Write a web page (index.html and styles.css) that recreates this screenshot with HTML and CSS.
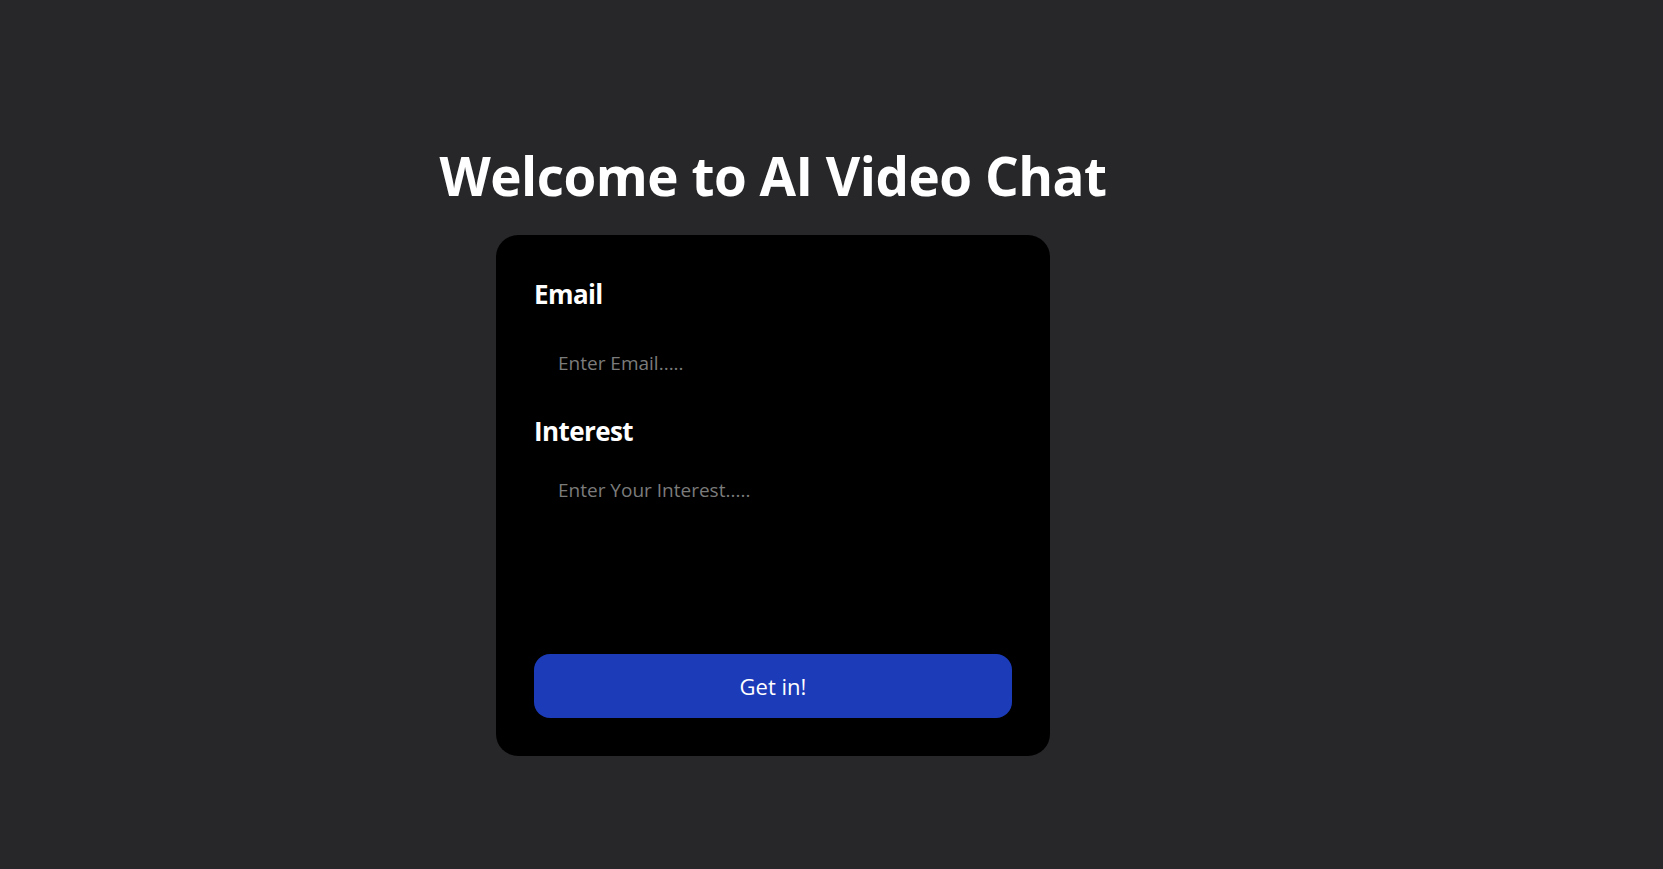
FILE: index.html
```html
<!DOCTYPE html>
<html lang="en">
<head>
<meta charset="UTF-8">
<title>AI Video Chat</title>
<link rel="stylesheet" href="styles.css">
</head>
<body>
<main class="page">
  <h1 class="title">Welcome to AI Video Chat</h1>
  <form class="card">
    <label class="label label-email" for="email">Email</label>
    <input class="field" id="email" type="email" placeholder="Enter Email.....">
    <label class="label label-interest" for="interest">Interest</label>
    <textarea class="area" id="interest" placeholder="Enter Your Interest....."></textarea>
    <button class="submit" type="button">Get in!</button>
  </form>
</main>
</body>
</html>
```

FILE: styles.css
```css
* { box-sizing: border-box; }

html, body {
  margin: 0;
  padding: 0;
  background: #27272a;
  height: 100%;
}

body {
  font-family: "Open Sans", "Noto Sans", sans-serif;
  color: #fff;
}

.page {
  display: flex;
  flex-direction: column;
  align-items: center;
  padding-top: 148px;
  padding-right: 117px;
  min-height: 100%;
}

.title {
  margin: 0;
  font-size: 53px;
  line-height: 56px;
  font-weight: 700;
  color: #fff;
  letter-spacing: -0.5px;
}

.card {
  margin-top: 31px;
  width: 554px;
  padding: 38px;
  background: #000;
  border-radius: 22px;
  display: flex;
  flex-direction: column;
}

.label {
  font-size: 26px;
  line-height: 40px;
  font-weight: 700;
  color: #fff;
  letter-spacing: -0.6px;
}

.label-email {
  padding-top: 1px;
}

.label-interest {
  margin-top: 15px;
}

.field {
  margin-top: 16px;
  height: 66px;
  padding: 0 24px;
  background: transparent;
  border: none;
  outline: none;
  font-family: inherit;
  font-size: 19px;
  color: #fff;
}

.area {
  margin-top: 9px;
  height: 170px;
  padding: 16px 24px;
  background: transparent;
  border: none;
  outline: none;
  resize: none;
  font-family: inherit;
  font-size: 19px;
  line-height: 28px;
  color: #fff;
}

.field::placeholder,
.area::placeholder {
  color: #7b7b7b;
  opacity: 1;
}

.submit {
  margin-top: 24px;
  height: 64px;
  border: none;
  border-radius: 16px;
  background: #1b3bb9;
  color: #fff;
  font-family: inherit;
  font-size: 22px;
  cursor: pointer;
}
```
